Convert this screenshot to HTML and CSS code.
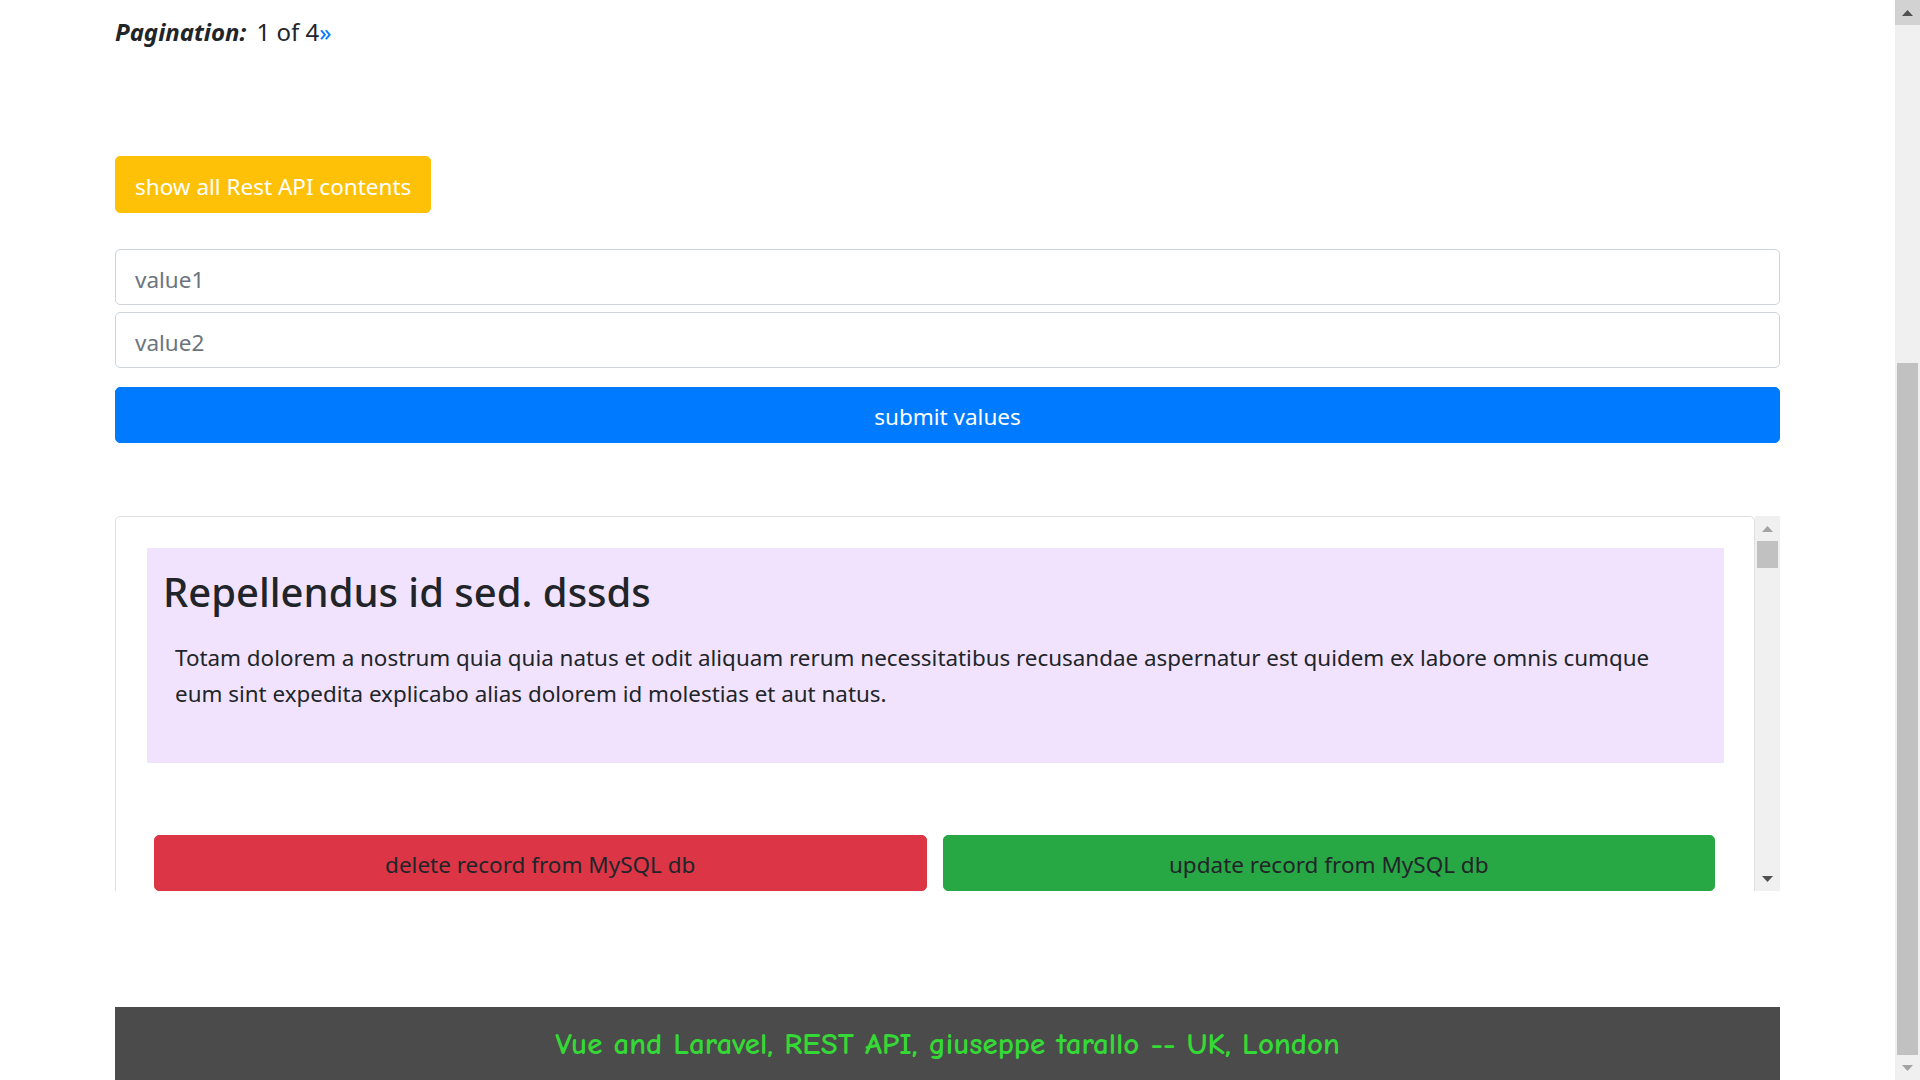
FILE: index.html
```html
<!DOCTYPE html>
<html lang="en">
<head>
<meta charset="utf-8">
<title>Vue and Laravel REST API</title>
<link rel="stylesheet" href="styles.css">
</head>
<body>
<div class="app">
  <main class="viewport">
    <div class="container">
      <p class="pagination"><strong class="pag-label">Pagination:</strong> 1 of 4<a class="pag-next" href="#">»</a></p>

      <button class="btn btn-warning" type="button">show all Rest API contents</button>

      <form class="entry-form">
        <input class="field" type="text" placeholder="value1">
        <input class="field" type="text" placeholder="value2">
        <button class="btn btn-primary btn-block" type="button">submit values</button>
      </form>

      <div class="records">
        <div class="records-list">
          <div class="card">
            <div class="card-body">
              <div class="record">
                <h2 class="record-title">Repellendus id sed. dssds</h2>
                <p class="record-text">Totam dolorem a nostrum quia quia natus et odit aliquam rerum necessitatibus recusandae aspernatur est quidem ex labore omnis cumque eum sint expedita explicabo alias dolorem id molestias et aut natus.</p>
              </div>
              <div class="actions">
                <button class="btn btn-danger" type="button">delete record from MySQL db</button>
                <button class="btn btn-success" type="button">update record from MySQL db</button>
              </div>
            </div>
          </div>
        </div>
        <div class="scrollbar">
          <div class="sb-btn">
            <svg width="11" height="6" viewBox="0 0 11 6"><path d="M5.5 0L11 6H0z" fill="#a3a3a3"/></svg>
          </div>
          <div class="sb-track">
            <div class="sb-thumb" style="margin-top:0;height:27px"></div>
          </div>
          <div class="sb-btn">
            <svg width="11" height="6" viewBox="0 0 11 6"><path d="M0 0H11L5.5 6z" fill="#505050"/></svg>
          </div>
        </div>
      </div>

      <footer class="site-footer">Vue and Laravel, REST API, giuseppe tarallo -- UK, London</footer>
    </div>
  </main>

  <div class="scrollbar page-scrollbar">
    <div class="sb-btn sb-btn-hover">
      <svg width="11" height="6" viewBox="0 0 11 6"><path d="M5.5 0L11 6H0z" fill="#505050"/></svg>
    </div>
    <div class="sb-track">
      <div class="sb-thumb" style="margin-top:338px;height:692px"></div>
    </div>
    <div class="sb-btn">
      <svg width="11" height="6" viewBox="0 0 11 6"><path d="M0 0H11L5.5 6z" fill="#a3a3a3"/></svg>
    </div>
  </div>
</div>
</body>
</html>
```

FILE: styles.css
```css
html, body {
  margin: 0;
  height: 100%;
}

body {
  background: #fff;
  color: #212529;
  font-family: "Noto Sans", "Open Sans", sans-serif;
  font-size: 22.5px;
  line-height: 1.5;
  overflow: hidden;
}

.app {
  display: flex;
  height: 100vh;
}
.viewport {
  flex: 1;
  min-width: 0;
  overflow: hidden;
}

.container {
  width: 1665px;
  margin: 0 auto;
  padding-top: 14px;
}

/* fake native scrollbars */
.scrollbar {
  width: 25px;
  flex: none;
  display: flex;
  flex-direction: column;
  background: #f0f0f0;
}
.sb-btn {
  height: 25px;
  flex: none;
  display: flex;
  align-items: center;
  justify-content: center;
}
.sb-btn svg {
  display: block;
}
.sb-btn-hover {
  background: #d2d2d2;
}
.sb-track {
  flex: 1;
  padding: 0 2px;
}
.sb-thumb {
  background: #c1c1c1;
}

.pagination {
  margin: 0;
  height: 36px;
  font-size: 24px;
  line-height: 36px;
  display: flex;
  align-items: baseline;
}
.pag-label {
  font-style: italic;
  font-weight: 700;
  margin-right: 10px;
}
.pag-next {
  color: #007bff;
  text-decoration: none;
}

.btn {
  box-sizing: border-box;
  font-family: inherit;
  border: 1px solid transparent;
  border-radius: 5px;
  cursor: pointer;
  font-size: 22.5px;
  line-height: 1.5;
  padding-top: 4px;
  padding-bottom: 0;
}
.btn-warning {
  display: block;
  margin-top: 106px;
  height: 57px;
  padding-left: 19px;
  padding-right: 19px;
  background: #ffc107;
  border-color: #ffc107;
  color: #fff;
}

.entry-form {
  margin-top: 36px;
  display: flex;
  flex-direction: column;
}
.field {
  display: block;
  box-sizing: border-box;
  width: 100%;
  height: 56px;
  padding: 4px 19px 0;
  border: 1px solid #ced4da;
  border-radius: 5px;
  font-family: inherit;
  font-size: 22.5px;
  color: #495057;
  background: #fff;
}
.field + .field {
  margin-top: 7px;
}
.field::placeholder {
  color: #6c757d;
}
.btn-primary {
  margin-top: 19px;
  height: 56px;
  background: #007bff;
  border-color: #007bff;
  color: #fff;
}
.btn-block {
  width: 100%;
}

.records {
  margin-top: 73px;
  height: 375px;
  display: flex;
}
.records-list {
  flex: 1;
  min-width: 0;
  overflow: hidden;
}

.card {
  border: 1px solid #dfdfdf;
  border-radius: 5px;
  background: #fff;
}
.card-body {
  padding: 31px 30px 31px 31px;
}
.record {
  background: #f1e3fd;
  padding: 20px 40px 51px 16px;
}
.record-title {
  margin: 0 0 23px;
  font-size: 40px;
  font-weight: 500;
  line-height: 48px;
}
.record-text {
  margin: 0;
  padding-left: 12px;
  padding-top: 1px;
  font-size: 22.4px;
  line-height: 36px;
}
.actions {
  margin-top: 72px;
  padding: 0 9px 0 7px;
  display: flex;
  gap: 16px;
}
.actions .btn {
  flex: 1;
  height: 56px;
  color: #212529;
}
.btn-danger {
  background: #dc3545;
  border-color: #dc3545;
}
.btn-success {
  background: #28a745;
  border-color: #28a745;
}

.site-footer {
  margin-top: 116px;
  height: 73px;
  box-sizing: border-box;
  padding-top: 2px;
  background: #4b4b4b;
  color: #35d935;
  font-family: "Comic Sans MS", "Comic Neue", cursive;
  font-size: 31px;
  font-weight: 700;
  display: flex;
  align-items: center;
  justify-content: center;
}
```
